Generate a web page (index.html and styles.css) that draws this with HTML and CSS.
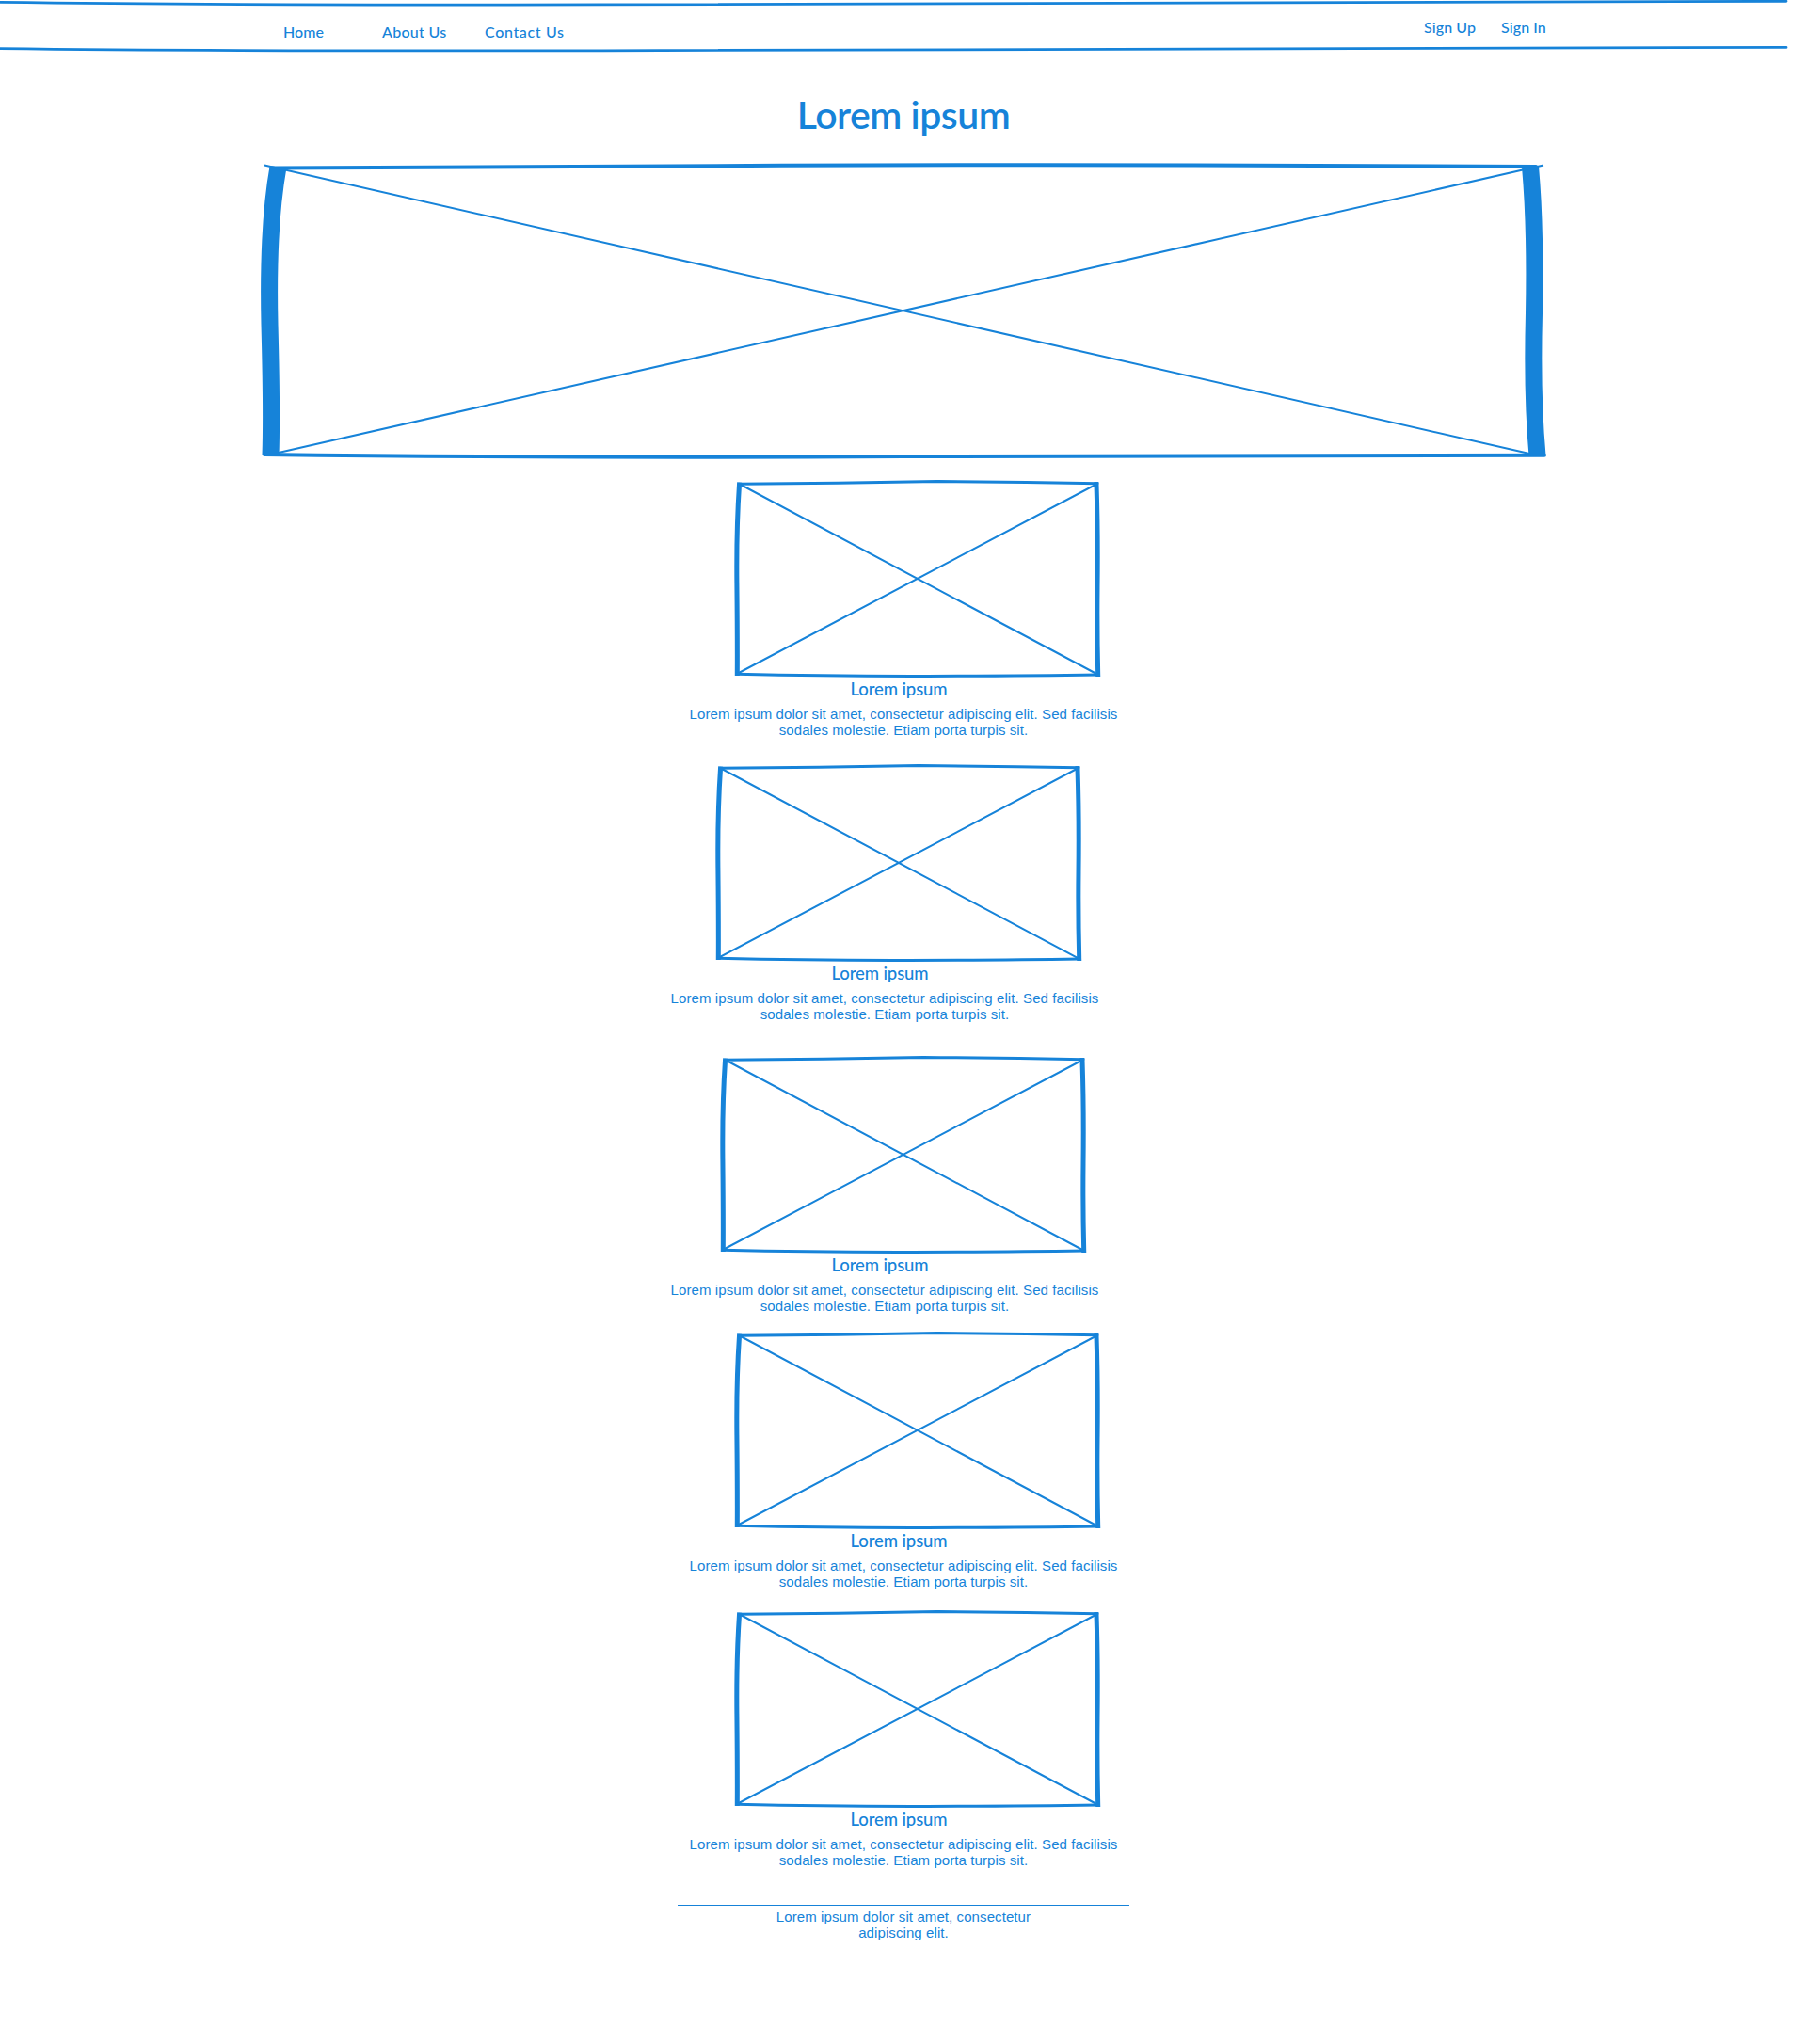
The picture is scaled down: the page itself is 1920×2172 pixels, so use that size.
FILE: index.html
```html
<!DOCTYPE html>
<html lang="en">
<head>
<meta charset="utf-8">
<title>Lorem ipsum</title>
<link rel="stylesheet" href="styles.css">
</head>
<body>
<svg class="defs" aria-hidden="true">
  <symbol id="frame" viewBox="0 0 400 220">
    <path class="edge" d="M15 14.3Q120 13.5 226 11.5Q310 12.2 396 13.7M12.7 216.3Q110 218.6 215 218.4T397 217"/>
    <path class="side" d="M15.5 15Q12.3 62 12.9 120T13.3 215.500M395 14.500Q396.700 65 396 125Q395.500 170 396.700 216.500"/>
    <path class="cross" d="M15 14L397 217M396 14L13 216"/>
  </symbol>
</svg>
<header class="topbar">
  <svg class="rule" viewBox="0 0 1920 20"><path d="M0 2.4Q240 5.700 640 4.900Q1550 4.900 1898 1.300"/></svg>
  <nav class="links">
    <div class="group"><a class="home">Home</a><a class="about">About Us</a><a class="contact">Contact Us</a></div>
    <div class="group account"><a class="signup">Sign Up</a><a class="signin">Sign In</a></div>
  </nav>
  <svg class="rule" viewBox="0 0 1920 20"><path d="M0 5.600Q240 8.600 640 7.800Q1550 7.800 1898 4.400"/></svg>
</header>
<main>
  <h1>Lorem ipsum</h1>
  <svg class="hero" viewBox="270 165 1380 330">
    <path class="hero-edge" d="M289 178.5Q600 177.5 830 175.8Q1200 174.3 1632 177M281 483Q600 487 960 485T1641 483.7"/>
    <path class="hero-side" d="M295.5 177.5C285.500 233 285.500 300 286.5 345C288 400 289 440 287.5 483.5M1626 177C1631 232 1631 280 1630 333C1628.5 390 1629 435 1633.5 484"/>
    <path class="cross" d="M281 175.5L1625 482M1640 175.5L296 481"/>
  </svg>
  <section class="cards">
    <article class="card"><svg class="frame"><use href="#frame"/></svg><h2>Lorem ipsum</h2><p>Lorem ipsum dolor sit amet, consectetur adipiscing elit. Sed facilisis sodales molestie. Etiam porta turpis sit.</p></article>
    <article class="card left"><svg class="frame"><use href="#frame"/></svg><h2>Lorem ipsum</h2><p>Lorem ipsum dolor sit amet, consectetur adipiscing elit. Sed facilisis sodales molestie. Etiam porta turpis sit.</p></article>
    <article class="card left nudged"><svg class="frame"><use href="#frame"/></svg><h2>Lorem ipsum</h2><p>Lorem ipsum dolor sit amet, consectetur adipiscing elit. Sed facilisis sodales molestie. Etiam porta turpis sit.</p></article>
    <article class="card"><svg class="frame"><use href="#frame"/></svg><h2>Lorem ipsum</h2><p>Lorem ipsum dolor sit amet, consectetur adipiscing elit. Sed facilisis sodales molestie. Etiam porta turpis sit.</p></article>
    <article class="card"><svg class="frame"><use href="#frame"/></svg><h2>Lorem ipsum</h2><p>Lorem ipsum dolor sit amet, consectetur adipiscing elit. Sed facilisis sodales molestie. Etiam porta turpis sit.</p></article>
  </section>
</main>
<footer><p>Lorem ipsum dolor sit amet, consectetur adipiscing elit.</p></footer>
</body>
</html>
```
FILE: styles.css
```css
* { box-sizing: border-box; }
body {
  margin: 0;
  min-height: 2172px;
  background: #fff;
  color: #1683d9;
  font: 15px/17px "Liberation Sans", Arial, sans-serif;
  letter-spacing: 0.09px;
}
h1, h2, p { margin: 0; }
.defs { display: block; width: 0; height: 0; }
svg path { fill: none; stroke: #1683d9; }
.topbar { height: 65px; }
.rule { display: block; width: 1920px; height: 16px; }
.topbar .rule path { stroke-width: 2.8; stroke-linecap: round; }
.topbar .rule { height: 20px; margin-bottom: -4px; }
.links {
  display: flex;
  justify-content: space-between;
  height: 30px;
  padding: 8px 275px 0 301px;
  font: 500 16px/20px "Tekton Pro", Lato, sans-serif;
}
.group { display: flex; }
.group a { display: block; white-space: nowrap; }
.home { width: 105px; }
.about { width: 109px; letter-spacing: 0.3px; }
.contact { letter-spacing: 0.65px; }
.account { margin-top: -5px; }
.signup { width: 82px; }
.signin { width: 50px; }
h1 {
  height: 100px;
  padding-top: 35px;
  text-align: center;
  font: 600 41px/44px "Tekton Pro", Lato, sans-serif;
  letter-spacing: -0.5px;
}
.hero { display: block; width: 1380px; height: 330px; margin-left: 270px; }
.hero-edge { stroke-width: 4; stroke-linecap: round; }
.hero-side { stroke-width: 18; }
.cross { stroke-width: 2; }
.cards { display: grid; grid-template-rows: 302px 310px 293px 296px 323px; width: 480px; margin: 5px auto 0; }
.card { text-align: center; }
.frame { display: block; width: 400px; height: 220px; margin-left: 50px; }
.edge { stroke-width: 3; stroke-linecap: round; }
.side { stroke-width: 5; stroke-linecap: square; }
.card h2 {
  width: 470px;
  height: 30px;
  font: 500 18.5px/24px "Tekton Pro", Lato, sans-serif;
  letter-spacing: -0.1px;
}
.left { margin-left: -20px; margin-right: 20px; }
.nudged .frame { margin-left: 55px; }
footer { width: 480px; margin: 0 auto; padding: 3px 90px 0; border-top: 1px solid #1683d9; text-align: center; }
```
